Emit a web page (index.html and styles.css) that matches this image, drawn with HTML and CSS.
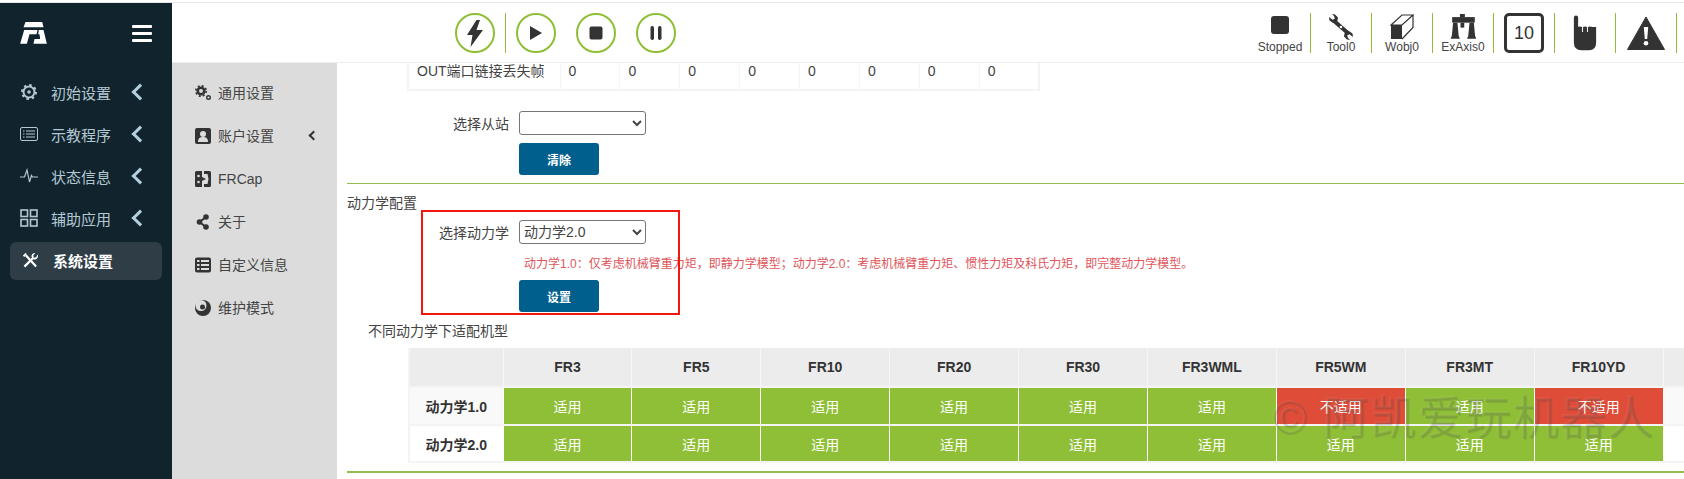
FILE: index.html
```html
<!DOCTYPE html>
<html lang="zh">
<head>
<meta charset="UTF-8" />
<meta name="viewport" content="width=device-width, initial-scale=1.0" />
<title>系统设置</title>
<link rel="stylesheet" href="styles.css">
</head>
<body>
  <div class="app">
    <!-- Left menu -->
    <aside class="sidebar">
      <div class="brand">
        <svg class="logo" viewBox="30 33 80 66"><path d="M46 33H96L100 49H40z"/><path d="M42 57H82L79 70H58L50 98H30z"/><path d="M86 57H100L110 98H70L73 84H90L88 70H84z"/></svg>
        <span class="burger"><i></i><i></i><i></i></span>
      </div>
      <nav class="menu">
        <a class="menu-item">
          <svg class="menu-icon" viewBox="0 0 18 18"><circle cx="9" cy="9" r="5.500" fill="none" stroke="currentColor" stroke-width="2"/><circle cx="9" cy="9" r="7" fill="none" stroke="currentColor" stroke-width="2" stroke-dasharray="2.500 3"/><circle cx="9" cy="9" r="1.800" fill="currentColor"/></svg>
          <span>初始设置</span><b class="chev"></b>
        </a>
        <a class="menu-item">
          <svg class="menu-icon" viewBox="0 0 18 18" fill="none" stroke="currentColor"><rect x=".5" y="2.500" width="17" height="13" rx="1.500"/><path d="M3 6h1.500M6 6h9M3 9h1.500M6 9h9M3 12h1.500M6 12h9"/></svg>
          <span>示教程序</span><b class="chev"></b>
        </a>
        <a class="menu-item">
          <svg class="menu-icon" viewBox="0 0 18 18" fill="none" stroke="currentColor" stroke-width="1.200"><path d="M0 10h4.500L7 3l2.500 12 2-6.500 1 1.500H18"/></svg>
          <span>状态信息</span><b class="chev"></b>
        </a>
        <a class="menu-item">
          <svg class="menu-icon" viewBox="0 0 18 18" fill="none" stroke="currentColor" stroke-width="1.600"><rect x="1" y="1" width="6.500" height="6.500"/><rect x="10.500" y="1" width="6.500" height="6.500"/><rect x="1" y="10.500" width="6.500" height="6.500"/><rect x="10.500" y="10.500" width="6.500" height="6.500"/></svg>
          <span>辅助应用</span><b class="chev"></b>
        </a>
        <a class="menu-item active">
          <svg class="menu-icon" viewBox="0 0 16 16" fill="none" stroke="currentColor" stroke-width="2.400"><path d="M1.500 14.500L11 5"/><path d="M15.500 1.500L14 4.500l-2.500.5-.5-2.500L13 .5l-1-.5A4 4 0 0 0 9 4l2.500 3A4 4 0 0 0 16 3z" fill="currentColor" stroke="none"/><path d="M3 2.500l11 12"/><path d="M.5 3.500L3.500.5" stroke-width="2"/></svg>
          <span>系统设置</span>
        </a>
      </nav>
    </aside>

    <div class="right">
      <!-- Top toolbar -->
      <header class="toolbar">
        <div class="run-group">
          <button class="round first"><svg viewBox="0 0 16 27"><path d="M9.500 0L0 15h5.500L3.500 27 16 10H9.500L13 0z" fill="#333"/></svg></button>
          <span class="divider"></span>
          <button class="round"><svg viewBox="0 0 14 14"><path d="M1 0l12 7-12 7z" fill="#333"/></svg></button>
          <button class="round"><svg viewBox="0 0 14 14"><rect width="13" height="13" x=".5" y=".5" rx="2" fill="#333"/></svg></button>
          <button class="round"><svg viewBox="0 0 14 14"><rect x="1.500" width="3.500" height="14" rx="1.700" fill="#333"/><rect x="9" width="3.500" height="14" rx="1.700" fill="#333"/></svg></button>
        </div>
        <div class="status-group">
          <div class="status-item">
            <span class="stop-box"></span>
            <span class="status-label">Stopped</span>
          </div>
          <div class="status-item">
            <svg class="status-icon" viewBox="0 0 26 26"><path d="M5 6l16 14" stroke="#333" stroke-width="4" fill="none"/><path d="M1 3l4 3 2-1-1-3-2-2 3 .5 3 3-.5 3-2 2-3 0-3-2z" fill="#333"/><path d="M25 23l-4-3-2 1 1 3 2 2-3-.5-3-3 .5-3 2-2 3 0 3 2z" fill="#333"/><circle cx="13" cy="13" r="1.300" fill="#fff"/></svg>
            <span class="status-label">Tool0</span>
          </div>
          <div class="status-item">
            <svg class="status-icon" viewBox="0 0 26 26"><path d="M2 11L13 1h11L13 11z" fill="none" stroke="#333" stroke-width="1.200"/><path d="M24 1v12.500L13 25" fill="none" stroke="#333" stroke-width="1.200"/><rect x="2" y="11" width="11" height="14" fill="#333"/></svg>
            <span class="status-label">Wobj0</span>
          </div>
          <div class="status-item">
            <svg class="status-icon" viewBox="28 20 84 84"><rect x="60" y="20" width="16" height="12" fill="#333"/><rect x="35" y="30" width="73" height="18" fill="#333"/><rect x="62" y="48" width="12" height="16" fill="#333"/><path d="M38 48h14l4 42 4 10H30l4-10zM91 48h14l4 42 4 10H83l4-10z" fill="#333"/></svg>
            <span class="status-label">ExAxis0</span>
          </div>
          <div class="status-item">
            <span class="speed-box">10</span>
          </div>
          <div class="status-item">
            <svg class="hand-icon" viewBox="400 20 72 110"><path d="M402 28a6.500 6.500 0 0 1 13 0V56q6-2 12 1V72h3V57q6-3 12 0V72h3V57q6-3 13 0l12 0V105q0 23-22 23H425q-23 0-23-23z" fill="#333"/></svg>
          </div>
          <div class="status-item">
            <svg class="warn-icon" viewBox="0 0 38 34"><path d="M19 1L37.500 33.500H.5z" fill="#333" stroke="#333" stroke-linejoin="round"/><path d="M16.800 11h4.400l-1 12h-2.400z" fill="#fff"/><circle cx="19" cy="27.300" r="2.300" fill="#fff"/></svg>
          </div>
        </div>
      </header>

      <div class="body-row">
        <!-- Second menu -->
        <nav class="submenu">
          <a class="sub-item">
            <svg class="sub-icon" viewBox="0 0 16 16"><circle cx="6" cy="6" r="3.300" fill="none" stroke="#333" stroke-width="2.600"/><circle cx="6" cy="6" r="5.200" fill="none" stroke="#333" stroke-width="1.600" stroke-dasharray="2 2.100"/><circle cx="13.500" cy="12.500" r="1.800" fill="none" stroke="#333" stroke-width="1.400"/></svg>
            <span>通用设置</span>
          </a>
          <a class="sub-item">
            <svg class="sub-icon" viewBox="0 0 16 16"><rect width="16" height="16" rx="2" fill="#333"/><circle cx="8" cy="6" r="3" fill="#dcdcdc"/><path d="M3 14c0-4 2-5 5-5s5 1 5 5z" fill="#dcdcdc"/></svg>
            <span>账户设置</span><b class="chev small"></b>
          </a>
          <a class="sub-item">
            <svg class="sub-icon" viewBox="0 0 16 16"><path d="M0 1.500A1.500 1.500 0 0 1 1.500 0H7v16H1.500A1.500 1.500 0 0 1 0 14.500z" fill="#333"/><path d="M9 0h5.500A1.500 1.500 0 0 1 16 1.500v13a1.500 1.500 0 0 1-1.500 1.500H9v-3h3.500l1-5-1-5H9z" fill="#333"/><circle cx="3.500" cy="5" r="1.300" fill="#dcdcdc"/><circle cx="3.500" cy="11" r="1.300" fill="#dcdcdc"/><path d="M7 6l4 2-4 2z" fill="#333"/></svg>
            <span>FRCap</span>
          </a>
          <a class="sub-item">
            <svg class="sub-icon" viewBox="0 0 16 16"><path d="M11 3L4.500 8l6.500 5" fill="none" stroke="#333" stroke-width="2"/><circle cx="11" cy="3" r="2.800" fill="#333"/><circle cx="4.500" cy="8" r="2.800" fill="#333"/><circle cx="11" cy="13" r="2.800" fill="#333"/></svg>
            <span>关于</span>
          </a>
          <a class="sub-item">
            <svg class="sub-icon" viewBox="0 0 16 16"><rect width="16" height="15" y=".5" rx="2" fill="#333"/><path d="M2 3h2.500v2H2zM6 3h8v2H6zM2 7h2.500v2H2zM6 7h8v2H6zM2 11h2.500v2H2zM6 11h8v2H6z" fill="#dcdcdc"/></svg>
            <span>自定义信息</span>
          </a>
          <a class="sub-item">
            <svg class="sub-icon" viewBox="0 0 16 16"><circle cx="8" cy="8" r="8" fill="#333"/><circle cx="6" cy="5.500" r="5.500" fill="#dcdcdc"/><circle cx="7.500" cy="7" r="2.500" fill="#333"/></svg>
            <span>维护模式</span>
          </a>
        </nav>

        <!-- Page content -->
        <main class="content">
          <table class="counter-table">
            <tr>
              <td class="counter-name">OUT端口链接丢失帧</td>
              <td>0</td><td>0</td><td>0</td><td>0</td><td>0</td><td>0</td><td>0</td><td>0</td>
            </tr>
          </table>

          <div class="form-row slave-row">
            <label>选择从站</label>
            <select><option></option></select>
          </div>
          <div class="btn-row"><button class="btn-blue">清除</button></div>

          <hr class="line" />

          <div class="dyn-section">
            <h4>动力学配置</h4>
            <div class="form-row">
              <label>选择动力学</label>
              <select><option>动力学2.0</option></select>
            </div>
            <p class="tip">动力学1.0：仅考虑机械臂重力矩，即静力学模型；动力学2.0：考虑机械臂重力矩、惯性力矩及科氏力矩，即完整动力学模型。</p>
            <div class="btn-row tight"><button class="btn-blue">设置</button></div>
            <div class="red-box"></div>
          </div>

          <h5>不同动力学下适配机型</h5>

          <div class="fit-wrap">
            <table class="fit-table">
              <thead>
                <tr>
                  <th class="col-head"></th><th>FR3</th><th>FR5</th><th>FR10</th><th>FR20</th><th>FR30</th><th>FR3WML</th><th>FR5WM</th><th>FR3MT</th><th>FR10YD</th><th class="col-last"></th>
                </tr>
              </thead>
              <tbody>
                <tr class="odd">
                  <th>动力学1.0</th>
                  <td class="ok">适用</td><td class="ok">适用</td><td class="ok">适用</td><td class="ok">适用</td><td class="ok">适用</td><td class="ok">适用</td>
                  <td class="no">不适用</td><td class="ok">适用</td><td class="no">不适用</td><td></td>
                </tr>
                <tr>
                  <th>动力学2.0</th>
                  <td class="ok">适用</td><td class="ok">适用</td><td class="ok">适用</td><td class="ok">适用</td><td class="ok">适用</td><td class="ok">适用</td>
                  <td class="ok">适用</td><td class="ok">适用</td><td class="ok">适用</td><td></td>
                </tr>
              </tbody>
            </table>
            <div class="watermark">© 阿凯爱玩机器人</div>
          </div>

          <hr class="line bottom" />
        </main>
      </div>
    </div>
  </div>
</body>
</html>
```

FILE: styles.css
```css
:root {
  --clr-dark: #11242d;
  --clr-green: #8fbf37;
  --clr-line: #93bd4f;
  --clr-blue: #005f8c;
  --clr-text: #444;
}

* {
  box-sizing: border-box;
}

html, body {
  height: 100%;
}

body {
  margin: 0;
  overflow: hidden;
  background: #fff;
  font-family: "Liberation Sans", "Noto Sans CJK SC", sans-serif;
  font-size: 14px;
  color: var(--clr-text);
}

.app {
  display: flex;
  height: 479px;
  padding-top: 3px;
  background: linear-gradient(#fff 2px, #e6e6e6 2px, #e6e6e6 3px, #fff 3px);
}

/* --- Left menu --- */
.sidebar {
  flex: 0 0 172px;
  background: var(--clr-dark);
  color: #b3c8d3;
}
.brand {
  display: flex;
  align-items: center;
  justify-content: space-between;
  height: 60px;
  padding: 0 20px 0 20px;
}
.logo {
  width: 27px;
  height: 22px;
  fill: #fff;
}
.burger {
  display: flex;
  flex-direction: column;
  gap: 4px;
  width: 20px;
}
.burger i {
  display: block;
  height: 3px;
  background: #fff;
  border-radius: 1px;
}
.menu {
  padding: 8px 10px 0;
  font-size: 15px;
}
.menu-item {
  display: flex;
  align-items: center;
  height: 42px;
  padding-left: 10px;
}
.menu-icon {
  flex: 0 0 18px;
  width: 18px;
  height: 18px;
  margin-right: 13px;
}
.menu-item.active {
  height: 38px;
  margin-top: 3px;
  padding-left: 13px;
  padding-bottom: 2px;
  border-radius: 6px;
  background: #2f3e46;
  color: #fff;
  font-weight: bold;
}
.menu-item.active .menu-icon {
  flex-basis: 15px;
  width: 15px;
  height: 15px;
  margin-right: 15px;
}
.chev {
  width: 12px;
  height: 12px;
  margin-left: 23px;
  border-left: 3px solid #b3d0e0;
  border-bottom: 3px solid #b3d0e0;
  transform: rotate(45deg);
}
.chev.small {
  width: 7px;
  height: 7px;
  margin-left: 36px;
  border-width: 2px;
  border-color: #333;
}

/* --- Top toolbar --- */
.right {
  flex: 1;
  display: flex;
  flex-direction: column;
  min-width: 0;
}
.toolbar {
  display: flex;
  justify-content: space-between;
  flex: 0 0 60px;
  padding: 10px 7px 7px 283px;
  border-bottom: 1px solid #eee;
  z-index: 1;
}
.run-group {
  display: flex;
  align-items: flex-start;
}
.round {
  display: flex;
  align-items: center;
  justify-content: center;
  width: 40px;
  height: 40px;
  margin-right: 20px;
  padding: 0;
  background: #fff;
  border: 2px solid var(--clr-green);
  border-radius: 50%;
}
.round svg {
  width: 14px;
  height: 14px;
}
.round.first {
  margin-right: 10px;
}
.round.first svg {
  width: 16px;
  height: 27px;
}
.divider {
  width: 1px;
  height: 40px;
  margin-right: 10px;
  background: var(--clr-green);
}
.status-group {
  display: flex;
  align-items: flex-start;
}
.status-item {
  display: flex;
  flex-direction: column;
  align-items: center;
  justify-content: center;
  position: relative;
  width: 61px;
  height: 40px;
  border-right: 1px solid var(--clr-green);
}
.stop-box {
  width: 18px;
  height: 18px;
  margin-top: 3px;
  border-radius: 3px;
  background: #333;
}
.status-icon {
  width: 26px;
  height: 26px;
  margin-top: 1px;
}
.status-label {
  font-size: 12px;
  line-height: 14px;
  margin-top: auto;
  margin-bottom: -1px;
  color: #444;
  white-space: nowrap;
}
.speed-box {
  display: flex;
  align-items: center;
  justify-content: center;
  width: 40px;
  height: 40px;
  border: 3px solid #333;
  border-radius: 5px;
  font-size: 18px;
  color: #333;
}
.hand-icon {
  width: 24px;
  height: 36px;
}
.warn-icon {
  width: 38px;
  height: 34px;
}

/* --- Second menu --- */
.body-row {
  flex: 1;
  display: flex;
  min-height: 0;
}
.submenu {
  flex: 0 0 165px;
  padding-top: 8px;
  background: #dcdcdc;
}
.sub-item {
  display: flex;
  align-items: center;
  height: 43px;
  padding-left: 23px;
  color: #444;
  line-height: 1;
}
.sub-icon {
  flex: 0 0 16px;
  width: 16px;
  height: 16px;
  margin-right: 7px;
}

/* --- Content --- */
.content {
  flex: 1;
  min-width: 0;
  overflow: hidden;
  padding-left: 10px;
}
.counter-table {
  width: 633px;
  margin-left: 60px;
  border-collapse: collapse;
  border: 2px solid #f4f4f4;
  border-top: 0;
  table-layout: fixed;
}
.counter-table td {
  height: 27px;
  padding: 0 0 11px 8px;
  border-left: 1px solid #f4f4f4;
  color: #444;
  line-height: 14px;
}
.counter-table .counter-name {
  width: 152px;
  padding-left: 8px;
  border-left: 0;
  white-space: nowrap;
}
.form-row {
  display: flex;
  align-items: center;
  height: 24px;
  padding-left: 60px;
}
.slave-row {
  margin-top: 20px;
}
.form-row label {
  width: 112px;
  padding-right: 10px;
  text-align: right;
  white-space: nowrap;
}
.form-row select {
  width: 127px;
  height: 24px;
  padding: 0;
  font-family: inherit;
  font-size: 14px;
  color: #444;
  background: #fff;
  border: 1px solid #767676;
  border-radius: 3px;
}
.btn-row {
  display: flex;
  margin-top: 8px;
  padding-left: 172px;
}
.btn-row.tight {
  margin-top: 7px;
}
.btn-blue {
  width: 80px;
  height: 32px;
  padding: 0;
  border: none;
  border-radius: 3px;
  background: var(--clr-blue);
  color: #fff;
  font-family: inherit;
  font-size: 12px;
  font-weight: bold;
}
.line {
  height: 1px;
  margin: 8px 0 0;
  border: 0;
  background: var(--clr-line);
}
.dyn-section {
  position: relative;
}
.dyn-section h4 {
  margin: 11px 0 0;
  font-size: 14px;
  font-weight: normal;
  line-height: 16px;
}
.dyn-section .form-row {
  margin-top: 9px;
}
.tip {
  margin: 12px 0 0;
  padding-left: 177px;
  font-size: 12px;
  line-height: 17px;
  color: #e0555a;
  white-space: nowrap;
}
.red-box {
  position: absolute;
  left: 74px;
  top: 15px;
  width: 259px;
  height: 105px;
  border: 2px solid #f5150f;
}
.content h5 {
  margin: 11px 0 0 21px;
  font-size: 14px;
  font-weight: normal;
  line-height: 16px;
}

/* --- Table of robot models --- */
.fit-wrap {
  position: relative;
  width: 1400px;
  margin: 9px 0 0 61px;
}
.fit-table {
  width: 100%;
  table-layout: fixed;
  border-collapse: collapse;
  border: 2px solid #f4f4f4;
  border-top: 0;
}
.fit-table th, .fit-table td {
  padding: 0;
  text-align: center;
  font-size: 14px;
  color: #333;
}
.fit-table thead th {
  width: 128.9px;
  height: 39px;
  background: #ececec;
  border-left: 1px solid #f7f7f7;
  border-bottom: 2px solid #f4f4f4;
}
.fit-table thead .col-head {
  width: 94px;
  border-left: 0;
}
.fit-table thead .col-last {
  width: auto;
}
.fit-table tbody th, .fit-table tbody td {
  height: 38px;
  border-bottom: 2px solid #f4f4f4;
}
.fit-table tbody tr:last-child th, .fit-table tbody tr:last-child td {
  height: 37px;
  border-bottom: 0;
}
.fit-table .odd th, .fit-table .odd td:last-child {
  background: #f9f9f9;
}
.fit-table td.ok, .fit-table td.no {
  color: #fff;
  border-left: 1px solid #fff;
}
.fit-table td.ok { background: var(--clr-green); }
.fit-table td.no { background: #df4c38; }
.watermark {
  position: absolute;
  left: 865px;
  top: 40px;
  font-size: 46px;
  line-height: 60px;
  letter-spacing: 1.5px;
  color: rgba(70, 70, 70, .13);
  text-shadow: 1px 1px 0 rgba(60, 60, 60, .12), -1px -1px 0 rgba(255, 255, 255, .06);
  white-space: nowrap;
  pointer-events: none;
}
.line.bottom {
  height: 2px;
  margin-top: 8px;
}
```
